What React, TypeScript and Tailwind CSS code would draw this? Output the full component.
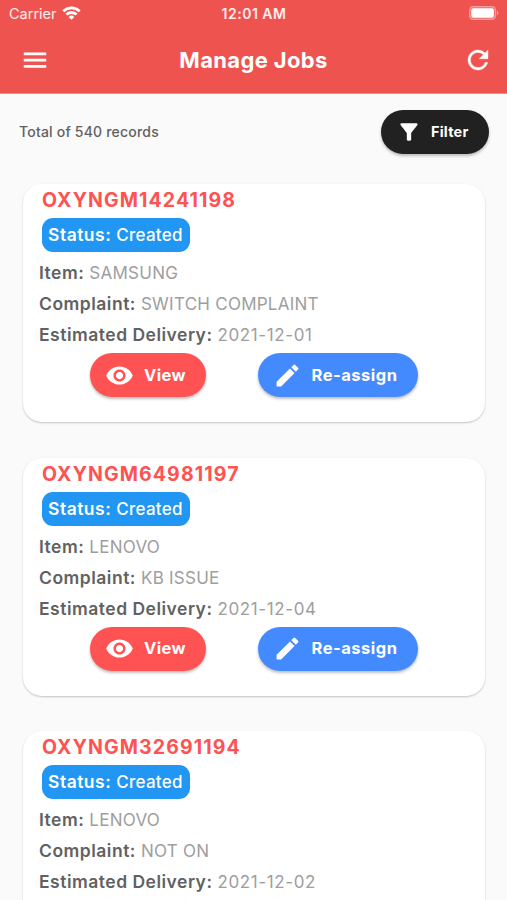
import React from 'react';
import { MdEdit, MdFilterAlt, MdVisibility } from 'react-icons/md';

interface Job {
  id: string;
  status: string;
  item: string;
  complaint: string;
  delivery: string;
}

const jobs: Job[] = [
  { id: 'OXYNGM14241198', status: 'Created', item: 'SAMSUNG', complaint: 'SWITCH COMPLAINT', delivery: '2021-12-01' },
  { id: 'OXYNGM64981197', status: 'Created', item: 'LENOVO', complaint: 'KB ISSUE', delivery: '2021-12-04' },
  { id: 'OXYNGM32691194', status: 'Created', item: 'LENOVO', complaint: 'NOT ON', delivery: '2021-12-02' },
];

const pillShadow = 'shadow-[0_2px_3px_rgba(0,0,0,0.25)]';

function StatusBar() {
  return (
    <div className="flex h-[27px] items-center justify-between px-2 text-white/90">
      <div className="flex flex-1 items-center gap-[5px] pl-px">
        <span className="text-[14.5px]">Carrier</span>
        <svg width="19" height="14" viewBox="0 0 19 14" fill="none" stroke="white" strokeWidth="2.8" className="-mt-px">
          <path d="M1.3 5.2a11.6 11.6 0 0 1 16.4 0" />
          <path d="M4.4 8.6a7.2 7.2 0 0 1 10.2 0" />
          <path d="M9.5 13.8 6.7 10.9a4 4 0 0 1 5.6 0z" fill="white" stroke="none" />
        </svg>
      </div>
      <span className="text-[14px] font-semibold tracking-[0.5px]">12:01 AM</span>
      <div className="flex flex-1 justify-end">
        <svg width="30" height="14" viewBox="0 0 30 14" className="-mt-px">
          <rect x="0.6" y="0.6" width="26" height="12.8" rx="3.6" fill="white" fillOpacity="0.15" stroke="white" strokeOpacity="0.4" strokeWidth="1.2" />
          <rect x="2.3" y="2.3" width="22.6" height="9.4" rx="2" fill="white" />
          <path d="M28 4.8c1.8.6 1.8 3.8 0 4.4z" fill="white" fillOpacity="0.5" />
        </svg>
      </div>
    </div>
  );
}

function Header() {
  return (
    <header className="h-[94px] shrink-0 border-b border-[#f38a88] bg-[#ef5350] text-white">
      <StatusBar />
      <div className="flex h-[66px] items-center pl-5 pr-[14px]">
        <button type="button" aria-label="Menu" className="w-[30px]">
          <svg width="30" height="30" viewBox="0 0 24 24" fill="currentColor">
            <path d="M3 18.1h18v-2.2H3v2.2zm0-5h18v-2.2H3v2.2zm0-7.2v2.2h18V5.9H3z" />
          </svg>
        </button>
        <h1 className="flex-1 pr-[6px] pt-px text-center text-[22px] font-bold tracking-[0.35px]">Manage Jobs</h1>
        <button type="button" aria-label="Refresh" className="pb-px">
          <svg width="30" height="30" viewBox="0 0 24 24" fill="currentColor" stroke="currentColor" strokeWidth="0.3">
            <path d="M17.65 6.35A7.958 7.958 0 0012 4c-4.42 0-7.99 3.58-7.99 8s3.57 8 7.99 8c3.73 0 6.84-2.55 7.73-6h-2.08A5.99 5.99 0 0112 18c-3.31 0-6-2.69-6-6s2.69-6 6-6c1.66 0 3.14.69 4.22 1.78L13 11h7V4l-2.35 2.35z" />
          </svg>
        </button>
      </div>
    </header>
  );
}

interface FieldProps {
  label: string;
  value: string;
  wide?: boolean;
}

function Field({ label, value, wide = false }: FieldProps) {
  return (
    <p className="h-[31px] whitespace-nowrap text-[17px] leading-[31px] tracking-[0.25px] text-[#9e9e9e]">
      <span className="text-[17.5px] font-semibold tracking-[0.5px] text-[#616161]">{label}:</span>{' '}
      <span className={wide ? 'tracking-[0.6px]' : ''}>{value}</span>
    </p>
  );
}

function JobCard({ job }: { job: Job }) {
  return (
    <article className="h-[238px] shrink-0 rounded-[19px] bg-white pl-4 shadow-[0_1px_2px_rgba(0,0,0,0.22)]">
      <h2 className="h-[34px] pl-[3px] text-[19.5px] font-bold leading-[33px] tracking-[1.12px] text-[#ff5252]">{job.id}</h2>
      <div className="ml-[3px] h-[34px] w-[148px] whitespace-nowrap rounded-[11px] bg-[#2196f3] pl-[6px] text-[17px] font-medium leading-[34px] tracking-[0.3px] text-white">
        <span className="text-[17.5px] font-semibold tracking-[0.5px]">Status:</span> {job.status}
      </div>
      <div className="pb-px pt-[5px]">
        <Field label="Item" value={job.item} />
        <Field label="Complaint" value={job.complaint} />
        <Field label="Estimated Delivery" value={job.delivery} wide />
      </div>
      <div className="flex gap-[51.5px] pl-[51px] pt-[2px] text-[16.5px] font-bold tracking-[0.4px] text-white">
        <button type="button" className={`flex h-11 w-[116px] items-center gap-[10px] rounded-full bg-[#ff5252] pl-[15px] ${pillShadow}`}>
          <MdVisibility size={29} />
          View
        </button>
        <button type="button" className={`flex h-11 w-[160.5px] items-center gap-[10px] rounded-full bg-[#448aff] pl-[15px] tracking-[0.5px] ${pillShadow}`}>
          <MdEdit size={29} />
          Re-assign
        </button>
      </div>
    </article>
  );
}

export default function App() {
  return (
    <div className="flex h-[900px] w-[507px] flex-col overflow-hidden bg-[#fafafa] font-['Inter',sans-serif]">
      <Header />
      <div className="flex h-[90px] shrink-0 items-start justify-between pl-[19px] pr-[18px] pt-4">
        <span className="pt-3 text-[14px] font-medium leading-5 tracking-[0.2px] text-[#616161]">Total of 540 records</span>
        <button
          type="button"
          className={`flex h-11 w-[108px] items-center gap-[9px] rounded-full bg-[#212121] pl-[15px] text-[14.5px] font-bold tracking-[0.2px] text-white ${pillShadow}`}
        >
          <MdFilterAlt size={26} />
          Filter
        </button>
      </div>
      <main className="flex flex-col gap-[35.7px] pl-[23px] pr-[22px]">
        {jobs.map((job) => (
          <JobCard key={job.id} job={job} />
        ))}
      </main>
    </div>
  );
}
